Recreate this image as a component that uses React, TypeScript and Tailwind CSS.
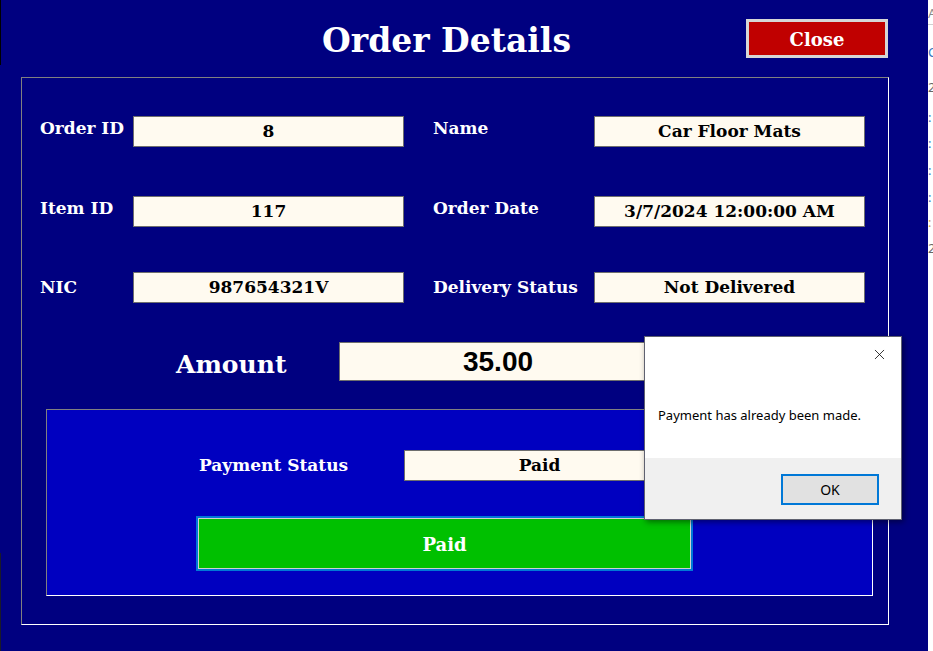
import { X } from 'lucide-react'

const serif = { fontFamily: "'DejaVu Serif', 'Liberation Serif', serif" }

function Field({ value, className = '' }: { value: string; className?: string }) {
  return (
    <div
      className={`flex h-[31px] w-[271px] items-center justify-center border border-[#6e6e6e] bg-[#fffaf0] text-[17px] font-bold text-black ${className}`}
    >
      {value}
    </div>
  )
}

function Label({ text, width, lift = false }: { text: string; width: string; lift?: boolean }) {
  return (
    <div className={`${width} text-[17px] font-bold leading-none text-white ${lift ? 'mb-[7px]' : ''}`}>
      {text}
    </div>
  )
}

const ROWS = [
  { l1: 'Order ID', v1: '8', l2: 'Name', v2: 'Car Floor Mats', lift: true },
  { l1: 'Item ID', v1: '117', l2: 'Order Date', v2: '3/7/2024 12:00:00 AM', lift: true },
  { l1: 'NIC', v1: '987654321V', l2: 'Delivery Status', v2: 'Not Delivered', lift: false },
]

// strip of the window behind, only its left edge shows
const BEHIND = [
  { c: 'C', top: 'mt-[21px]', col: 'text-[#3a78c0]' },
  { c: '2', top: 'mt-[23px]', col: 'text-[#666]' },
  { c: ':', top: 'mt-[18px]', col: 'text-[#3a78c0]' },
  { c: ':', top: 'mt-[14px]', col: 'text-[#3a78c0]' },
  { c: ':', top: 'mt-[15px]', col: 'text-[#3a78c0]' },
  { c: ':', top: 'mt-[15px]', col: 'text-[#3a78c0]' },
  { c: ':', top: 'mt-[13px]', col: 'text-[#d9a441]' },
  { c: '2', top: 'mt-[14px]', col: 'text-[#666]' },
]

export default function App() {
  return (
    <div className="relative flex h-[651px] w-[933px] overflow-hidden bg-white" style={serif}>
      {/* Order Details window */}
      <div className="relative h-[651px] w-[928px] shrink-0 bg-[#000080]">
        <div className="absolute left-0 top-0 h-[65px] w-[1px] bg-black" />
        <div className="absolute bottom-0 left-0 h-[98px] w-[1px] bg-[#1a1a2a]" />

        {/* header */}
        <div className="flex h-[77px] items-start">
          <h1 className="ml-[322px] mt-[19px] text-[33px] font-bold leading-[44px] text-white">Order Details</h1>
          <button className="ml-auto mr-[40px] mt-[19px] flex h-[39px] w-[142px] items-center justify-center border-[3px] border-[#d6d6d6] bg-[#c00000] pt-[1px] text-[18px] font-bold text-white">
            Close
          </button>
        </div>

        {/* group box */}
        <div className="ml-[21px] h-[548px] w-[868px] border border-b-white border-l-[#808080] border-r-white border-t-[#808080]">
          <div className="flex flex-col pt-[38px]">
            {ROWS.map((r, i) => (
              <div key={r.l1} className={`flex items-center pl-[18px] ${i === 1 ? 'mt-[49px]' : i === 2 ? 'mt-[45px]' : ''}`}>
                <Label text={r.l1} width="w-[93px]" lift={r.lift} />
                <Field value={r.v1} />
                <div className="ml-[29px]">
                  <Label text={r.l2} width="w-[161px]" lift={r.lift} />
                </div>
                <Field value={r.v2} />
              </div>
            ))}

            {/* amount */}
            <div className="mt-[39px] flex items-center">
              <div className="ml-[154px] mt-[5px] w-[163px] text-[25px] font-bold leading-none text-white">Amount</div>
              <div
                className="flex h-[39px] w-[318px] items-center justify-center border border-[#6e6e6e] bg-[#fffaf0] text-[28px] font-bold text-black"
                style={{ fontFamily: "'Liberation Sans', Arial, sans-serif" }}
              >
                35.00
              </div>
            </div>

            {/* payment panel */}
            <div className="ml-[24px] mt-[28px] h-[187px] w-[827px] border border-b-white border-l-[#808080] border-r-white border-t-[#808080] bg-[#0000c0]">
              <div className="mt-[40px] flex items-center">
                <div className="ml-[152px] w-[205px] text-[17px] font-bold leading-none text-white">Payment Status</div>
                <Field value="Paid" />
              </div>
              <button className="ml-[149px] mt-[35px] flex h-[55px] w-[497px] items-center justify-center border-[2px] border-[#0078d7] text-[18px] font-bold text-white">
                <span className="flex h-full w-full items-center justify-center border border-[#d0d0d0] bg-[#00c000] pt-[2px]">Paid</span>
              </button>
            </div>
          </div>
        </div>
      </div>

      {/* window behind */}
      <div className="flex w-[5px] flex-col overflow-hidden text-[13px] leading-[12px]" style={{ fontFamily: "'Noto Sans', sans-serif" }}>
        <span className="mt-[7px] block h-[12px] text-[#8a8a8a]">A</span>
        <div className="mt-[5px] h-[1px] w-full bg-[#d0d0d0]" />
        {BEHIND.map((b, i) => (
          <span key={i} className={`${b.top} ${b.col} block h-[12px]`}>
            {b.c}
          </span>
        ))}
      </div>

      {/* message box */}
      <div
        className="absolute left-[644px] top-[336px] flex h-[184px] w-[258px] flex-col border border-[#5f6170] bg-white shadow-[2px_2px_6px_rgba(0,0,0,0.45)]"
        style={{ fontFamily: "'Noto Sans', 'Open Sans', sans-serif" }}
      >
        <div className="relative h-[121px]">
          <X className="absolute right-[13px] top-[9px] h-[17px] w-[17px] text-black" strokeWidth={1.1} />
          <p className="pl-[13px] pt-[72px] text-[13px] leading-none text-black">Payment has already been made.</p>
        </div>
        <div className="flex flex-1 justify-end bg-[#f0f0f0] pr-[22px] pt-[16px]">
          <button className="flex h-[31px] w-[98px] items-center justify-center border-[2px] border-[#0078d7] bg-[#e1e1e1] text-[14px] text-black">
            OK
          </button>
        </div>
      </div>
    </div>
  )
}
